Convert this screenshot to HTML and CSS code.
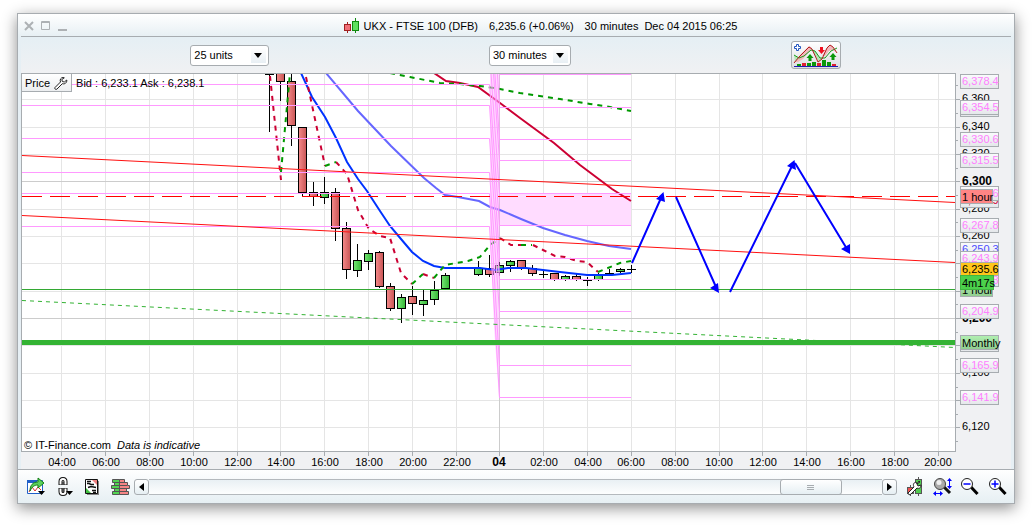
FILE: index.html
```
<!DOCTYPE html>
<html lang="en">
<head>
    <meta charset="utf-8">
    <title>UKX - FTSE 100 (DFB)</title>
    <link rel="stylesheet" href="styles.css">
</head>
<body>
    <div class="window">
        <header class="title-bar">
            <div class="window-buttons">
                <button aria-label="Close"><svg width="10" height="10"><path d="M1 1l8 8M9 1l-8 8" stroke-width="2"/></svg></button>
                <button aria-label="Maximize"><svg width="10" height="10"><path d="M.5 .5h8v8h-8zM1 1.500h8"/></svg></button>
                <button aria-label="Minimize"><svg width="10" height="10"><path d="M0 9h9" stroke-width="2"/></svg></button>
            </div>
            <div class="title">
                <svg class="title-icon" width="16" height="16">
                    <path d="M3.500 4v11" stroke="#a02020"/><rect x=".5" y="6.500" width="6" height="6" fill="#f07078" stroke="#a02020"/>
                    <path d="M11.500 0v15" stroke="#108a10"/><rect x="8.500" y="3.500" width="6" height="9" fill="#5fe05f" stroke="#108a10"/>
                </svg>
                <span class="name">UKX - FTSE 100 (DFB)</span>
                <span class="quote">6,235.6 (+0.06%)</span>
                <span class="period">30 minutes</span>
                <span>Dec 04 2015 06:25</span>
            </div>
        </header>

        <div class="toolbar">
            <select class="units" aria-label="Units"><option>25 units</option></select>
            <select class="timeframe" aria-label="Timeframe"><option>30 minutes</option></select>
            <button class="indicators" aria-label="Add indicator">
                <svg width="46" height="24">
                    <path d="M1 19l7-8 8-8 3 2-9 11-5 3zM29 13l6-10 3-1 6 8-4-3-4 1-4 5z" fill="#f3b8bc"/>
                    <path d="M1 12l5 3-4 4zM18 6l4 2 5 7 3 0-4 4z" fill="#b4e6b4"/>
                    <path d="M1 12l5 3 5-2 7-6 4 1 5 7 5 0 6-7 6-3" fill="none" stroke="#1a9b1a"/>
                    <path d="M1 20l5-6 10-10 3 2 6 13 4-3 5-11 3-3 3 2 4 6" fill="none" stroke="#b01c1c"/>
                    <path d="M4 1.500h2v2h2v2h-2v2h-2v-2h-2v-2h2z" fill="#fff" stroke="#2255c0" transform="translate(-.5)"/>
                    <path d="M15.500 18v-3h-2l3.500-4 3.500 4h-2v3zM38.500 17v-3h-2l3.500-4 3.500 4h-2v3z" fill="#0a980a"/>
                    <path d="M27 4h3v3h2l-3.500 4-3.500-4h2z" fill="#f01020"/>
                    <path d="M4 21h4v2h-4zM14 20h4v3h-4zM19 19h4v4h-4zM29 17h4v6h-4zM34 19h4v4h-4z" fill="#0a980a"/>
                    <path d="M9 20h4v3h-4zM24 20h4v3h-4zM39 21h4v2h-4z" fill="#e02030"/>
                    <path d="M1 23.500h44" stroke="#1c1cb0"/>
                </svg>
            </button>
        </div>

        <div class="chart">
            <svg class="plot" viewBox="21 73 990 396">
                <defs>
                    <clipPath id="area"><rect x="22" y="74" width="933" height="377"/></clipPath>
                    <linearGradient id="up"><stop offset="0" stop-color="#73e673"/><stop offset="1" stop-color="#35b535"/></linearGradient>
                    <linearGradient id="down"><stop offset="0" stop-color="#f58a8a"/><stop offset="1" stop-color="#c85555"/></linearGradient>
                    <linearGradient id="tag" x2="0" y2="1"><stop offset="0" stop-color="#fafbfc"/><stop offset="1" stop-color="#e4e7ea"/></linearGradient>
                    <linearGradient id="tag-green" x2="0" y2="1"><stop offset="0" stop-color="#b2f0b2"/><stop offset="1" stop-color="#8fcc8f"/></linearGradient>
                </defs>
                <rect x="21.500" y="73.500" width="934" height="378" class="frame"/>

                <g clip-path="url(#area)">
                    <!-- grid -->
                    <path class="grid" d="M61.500 73v378M105.500 73v378M149.500 73v378M193.500 73v378M237.500 73v378M280.500 73v378M324.500 73v378M368.500 73v378M412.500 73v378M456.500 73v378M543.500 73v378M587.500 73v378M631.500 73v378M675.500 73v378M719.500 73v378M762.500 73v378M806.500 73v378M850.500 73v378M894.500 73v378M938.500 73v378"/>
                    <path class="grid" d="M22 99.500h933M22 127.500h933M22 154.500h933M22 209.500h933M22 236.500h933M22 263.500h933M22 291.500h933M22 345.500h933M22 373.500h933M22 400.500h933M22 427.500h933"/>
                    <path class="grid major" d="M22 181.500h933M22 318.500h933M499.500 73v378"/>

                    <rect x="500" y="194" width="131" height="32" class="zone"/>

                    <!-- candles -->
                    <path class="wick" d="M269.500 73v59M265 74.500h9M280.500 73v28M291.500 73v73M302.500 127v70M313.500 182v24M324.500 177v27M335.500 188v53M346.500 222v57M357.500 244v33M368.500 250v20M379.500 251v37M390.500 283v28M401.500 294v29M412.500 286v29M423.500 290v26M434.500 281v24M445.500 273v16M478.500 261v15M489.500 255v22M499.500 262v14M510.500 260v12M521.500 260v10M532.500 265v11M543.500 270v8M539 274.500h9M554.500 273v8M565.500 275v6M576.500 273v8M587.500 277v9M583 280.500h9M598.500 273v8M609.500 269v5M605 273.500h9M620.500 268v5M631.500 265v8M627 269.500h9"/>
                    <g class="down">
                        <rect x="276.500" y="72.500" width="8" height="9"/>
                        <rect x="287.500" y="81.500" width="8" height="44"/>
                        <rect x="298.500" y="127.500" width="8" height="65"/>
                        <rect x="309.500" y="192.500" width="8" height="4"/>
                        <rect x="331.500" y="192.500" width="8" height="36"/>
                        <rect x="342.500" y="228.500" width="8" height="41"/>
                        <rect x="375.500" y="252.500" width="8" height="34"/>
                        <rect x="386.500" y="286.500" width="8" height="22"/>
                        <rect x="408.500" y="296.500" width="8" height="7"/>
                        <rect x="485.500" y="268.500" width="8" height="6"/>
                        <rect x="517.500" y="260.500" width="8" height="7"/>
                        <rect x="528.500" y="268.500" width="8" height="5"/>
                        <rect x="550.500" y="273.500" width="8" height="6"/>
                        <rect x="572.500" y="276.500" width="8" height="3"/>
                    </g>
                    <g class="up">
                        <rect x="320.500" y="192.500" width="8" height="5"/>
                        <rect x="353.500" y="260.500" width="8" height="10"/>
                        <rect x="364.500" y="253.500" width="8" height="8"/>
                        <rect x="397.500" y="297.500" width="8" height="11"/>
                        <rect x="419.500" y="300.500" width="8" height="4"/>
                        <rect x="430.500" y="290.500" width="8" height="9"/>
                        <rect x="441.500" y="275.500" width="8" height="13"/>
                        <rect x="474.500" y="268.500" width="8" height="6"/>
                        <rect x="495.500" y="265.500" width="8" height="7"/>
                        <rect x="506.500" y="261.500" width="8" height="4"/>
                        <rect x="561.500" y="276.500" width="8" height="3"/>
                        <rect x="594.500" y="274.500" width="8" height="5"/>
                        <rect x="616.500" y="269.500" width="8" height="2"/>
                    </g>

                    <!-- moving averages -->
                    <path class="ma-slow" d="M434 73l12 8 14 2 18 4 22 16 20 15 34 25 26 22 32 24 19 12"/>
                    <path class="ma-long dashed" d="M390 73l20 4 30 6 20 1 20 2 20 3 20 4 40 6 30 5 20 3 21 4"/>
                    <path class="ma-mid" d="M326 73l32 38 33 35 33 32 12 10 9 7 13 2 21 4 11 6 10 3 21 9 22 9 22 7 22 6 22 5 22 3"/>
                    <path class="ma-fast" d="M301 73l11 24 13 20 11 21 11 24 11 17 9 12 13 20 10 15 11 13 11 13 11 9 11 5 11 2h35l15 2 13-2h18l17 2 17 2 27 3h25l19-2"/>
                    <g class="dashed trend-down">
                        <path d="M270 76l11 104"/>
                        <path d="M306 77l19 89"/>
                        <path d="M336 162l11 12 11 36 11 19 11 7 10 2 11 35 11 11"/>
                        <path d="M423 274l11 4"/>
                        <path d="M500 238l11 7h10M533 245l10 5 12 6 10 1 12 4 10 1 11 10"/>
                    </g>
                    <g class="dashed trend-up">
                        <path d="M281 172l9-99"/>
                        <path d="M325 166l11-4M412 284l11-10"/>
                        <path d="M434 278l11-13 23-4 12-4 10-12 10-7M521 245h11"/>
                        <path d="M598 272l22-9 11-2"/>
                    </g>

                    <!-- pivot levels, previous day joined to today -->
                    <path class="pivot" d="M22 84.500H489.500L499.500 225.500H631M22 105.500H489.500L499.500 258.500H631M22 138.500H489.500L499.500 279.500H631M22 172.500H489.500L499.500 311.500H631M22 193.500H489.500L499.500 365.500H631M22 226.500H489.500L499.500 397.500H631"/>
                    <path class="pivot" d="M489.500 51.500L499.500 193.500H631M490.500 30L499.500 160.500H631M490.500 10L499.500 139.500H631M491.500-20L499.500 107.500H631M492.500-50L499.500 74.500H631"/>
                    <path class="pivot-band" d="M490 74v152l4 100 5 72h1V74z"/>

                    <!-- levels and channels -->
                    <path class="level-red" d="M22 196.500h933"/>
                    <path class="channel" d="M22 155.500L955 202.500M22 215.500L955 262.500"/>
                    <path class="level-green" d="M22 289.500h933"/>
                    <path class="support" d="M22 300.500L955 347.500"/>
                    <path class="monthly" d="M22 342.500h933"/>

                    <!-- forecast arrows -->
                    <path class="arrow" d="M632 263L661 198M676 197L716 287M730 292L792 166M795 163L847 249"/>
                    <path class="arrow-head" d="M663.500 192l1.500 10-9-3zM719 293l-9-5 8-5zM794.500 160l1.500 10-9-4zM850 254l-9-5 9-5z"/>
                </g>

                <text x="24" y="449">© IT-Finance.com</text>
                <text x="117" y="449" class="italic">Data is indicative</text>

                <!-- time axis -->
                <path class="tick" d="M61.500 452v4M105.500 452v4M149.500 452v4M193.500 452v4M237.500 452v4M280.500 452v4M324.500 452v4M368.500 452v4M412.500 452v4M456.500 452v4M499.500 452v4M543.500 452v4M587.500 452v4M631.500 452v4M675.500 452v4M719.500 452v4M762.500 452v4M806.500 452v4M850.500 452v4M894.500 452v4M938.500 452v4"/>
                <g class="times">
                    <text x="62" y="466">04:00</text>
                    <text x="106" y="466">06:00</text>
                    <text x="150" y="466">08:00</text>
                    <text x="194" y="466">10:00</text>
                    <text x="238" y="466">12:00</text>
                    <text x="281" y="466">14:00</text>
                    <text x="325" y="466">16:00</text>
                    <text x="369" y="466">18:00</text>
                    <text x="413" y="466">20:00</text>
                    <text x="457" y="466">22:00</text>
                    <text x="499" y="466" class="bold">04</text>
                    <text x="544" y="466">02:00</text>
                    <text x="588" y="466">04:00</text>
                    <text x="631" y="466">06:00</text>
                    <text x="675" y="466">08:00</text>
                    <text x="719" y="466">10:00</text>
                    <text x="763" y="466">12:00</text>
                    <text x="807" y="466">14:00</text>
                    <text x="851" y="466">16:00</text>
                    <text x="895" y="466">18:00</text>
                    <text x="938" y="466">20:00</text>
                </g>

                <!-- price axis -->
                <path class="tick" d="M956 99.500h4M956 127.500h4M956 154.500h4M956 181.500h4M956 209.500h4M956 236.500h4M956 263.500h4M956 291.500h4M956 318.500h4M956 345.500h4M956 373.500h4M956 400.500h4M956 427.500h4"/>
                <path class="tick" d="M956 85.500h2M956 113.500h2M956 140.500h2M956 168.500h2M956 195.500h2M956 222.500h2M956 250.500h2M956 277.500h2M956 304.500h2M956 332.500h2M956 359.500h2M956 387.500h2M956 414.500h2M956 441.500h2"/>
                <text x="962" y="102">6,360</text>
                <text x="962" y="130">6,340</text>
                <text x="962" y="157">6,320</text>
                <text x="962" y="185" class="bold">6,300</text>
                <text x="962" y="212">6,280</text>
                <text x="962" y="239">6,260</text>
                <text x="962" y="322" class="bold">6,200</text>
                <text x="962" y="376">6,160</text>
                <text x="962" y="430">6,120</text>
                <g class="tags">
                    <rect x="960.500" y="74.500" width="38" height="14"/><text x="962" y="85">6,378.4</text>
                    <rect x="960.500" y="102.500" width="38" height="14"/>
                    <rect x="960.500" y="100.500" width="38" height="14"/><text x="962" y="111">6,354.5</text>
                    <rect x="960.500" y="132.500" width="38" height="14"/><text x="962" y="143">6,330.6</text>
                    <rect x="960.500" y="153.500" width="38" height="14"/><text x="962" y="164">6,315.5</text>
                    <rect x="960.500" y="193.500" width="38" height="14"/><text x="962" y="204" class="crimson">6,285.9</text>
                    <rect x="960.500" y="186.500" width="38" height="14"/><text x="962" y="197">6,291.6</text>
                    <rect x="960.500" y="189.500" width="32" height="14" class="red"/><text x="962" y="201" class="dark">1 hour</text>
                    <rect x="960.500" y="218.500" width="38" height="14"/><text x="962" y="229">6,267.8</text>
                    <rect x="960.500" y="242.500" width="38" height="14"/><text x="962" y="253" class="blue">6,250.3</text>
                    <rect x="960.500" y="251.500" width="38" height="14"/><text x="962" y="262">6,243.9</text>
                    <rect x="960.500" y="282.500" width="32" height="14" class="green"/><text x="962" y="294" class="dark">1 hour</text>
                    <rect x="960.500" y="272.500" width="38" height="14"/><text x="962" y="284">6,228.8</text>
                    <rect x="960.500" y="262.500" width="38" height="13" class="last"/><text x="962" y="273" class="dark">6,235.6</text>
                    <rect x="960.500" y="275.500" width="33" height="14" class="countdown"/><text x="962" y="287" class="dark">4m17s</text>
                    <rect x="960.500" y="304.500" width="38" height="14"/><text x="962" y="315">6,204.9</text>
                    <rect x="960.500" y="337.500" width="38" height="14"/>
                    <rect x="960.500" y="335.500" width="38" height="14" class="green"/><text x="962" y="347" class="dark">Monthly</text>
                    <rect x="960.500" y="358.500" width="38" height="14"/><text x="962" y="369">6,165.9</text>
                    <rect x="960.500" y="390.500" width="38" height="14"/><text x="962" y="401">6,141.9</text>
                </g>
            </svg>
            <div class="legend">
                <button class="price">Price
                    <svg width="14" height="14"><path d="M9 1.500c-2 0-3.500 2-2.500 4.500l-5.500 5.500c-.8 1.200.8 2.500 1.800 1.700l5.500-5.500c2.500.8 4.800-1 4.500-3.700l-2.500 2-2-.5-.5-2 2.500-1.700z" fill="#fff" stroke="#222"/></svg>
                </button>
                <span>Bid : 6,233.1 Ask : 6,238.1</span>
            </div>
        </div>

        <footer class="bottom-bar">
            <button class="tool" aria-label="Export chart">
                <svg width="20" height="20">
                    <path d="M.5 3.500h15v13h-15z" fill="#fff" stroke="#2060c8"/><path d="M0 4.500h10" stroke="#2060c8" stroke-width="3"/>
                    <path d="M2 15l3-5 3 4 3-4 3 3" fill="none" stroke="#e03030"/>
                    <path d="M3 14c0-6 3-9 8-9v-4l6 5-6 5v-3c-4 0-6 2-8 6z" fill="#5cd05c" stroke="#158015"/>
                    <path d="M11 14h7l-3.500 4z"/>
                </svg>
            </button>
            <button class="tool" aria-label="Link charts">
                <svg width="18" height="20" fill="none">
                    <path d="M3.500 8v-3.500q0-2.500 2.500-2.500t2.500 2.500v3.500M3.500 11v3.500q0 2.500 2.500 2.500t2.500-2.500v-3.500" stroke="#111" stroke-width="4"/>
                    <path d="M3.500 7.500v-3q0-2.500 2.500-2.500t2.500 2.500v3M3.500 11.500v3q0 2.500 2.500 2.500t2.500-2.500v-3" stroke="#fff" stroke-width="2"/>
                    <path d="M6 5v3M6 11v4" stroke="#111"/>
                    <path d="M9 14h7l-3.500 4z" fill="#000"/>
                </svg>
            </button>
            <button class="tool" aria-label="News">
                <svg width="16" height="20">
                    <path d="M2 4h12v14h-12z" fill="#888"/><path d="M.5 2.500h12v14h-12z" fill="#fff" stroke="#111"/>
                    <path d="M7 3h5v5z" fill="#f08080"/><path d="M1 16v-5l5 5z" fill="#40c040"/>
                    <path d="M2 4.500h4M2 6.500h2l2 1h3M3 10.500l3-1 5 1M7 13.500h4M8 15.500h3" fill="none" stroke="#111" stroke-width="1.500"/>
                </svg>
            </button>
            <button class="tool" aria-label="Order book">
                <svg width="20" height="20">
                    <path d="M1.500 2.500h7v15h-7v-3h2v-3h-3v-3h3v-3h-2z" fill="#52d452" stroke="#555"/>
                    <path d="M8.500 2.500h5v3h3v3h2v3h-3v3h2v3h-9z" fill="#f58585" stroke="#555"/>
                    <path d="M3 5.500h11M3 8.500h13M3 11.500h13M3 14.500h13" stroke="#555"/>
                </svg>
            </button>
            <div class="scrollbar">
                <button class="step" aria-label="Scroll left"><svg width="5" height="8"><path d="M5 0v8L0 4z"/></svg></button>
                <input type="range" min="0" max="100" value="94" aria-label="Chart position">
                <button class="step" aria-label="Scroll right"><svg width="5" height="8"><path d="M0 0v8l5-4z"/></svg></button>
            </div>
            <div class="view-tools">
                <button class="tool" aria-label="Chart settings">
                    <svg width="18" height="20">
                        <path d="M3.500 8v11M11.500 0v19" stroke="#555"/><rect x=".5" y="10.500" width="6" height="6" fill="#f05050" stroke="#555"/><rect x="8.500" y="2.500" width="6" height="14" fill="#50cc50" stroke="#555"/>
                        <path d="M12 4l-2 3-1-2c-3 1-3 3-2 5l-6 6c0 2 2 2 3 1l6-6c2 1 4 0 4-3l-3 1-1-2 3-2z" fill="#fff" stroke="#222"/>
                    </svg>
                </button>
                <button class="tool" aria-label="Auto scale">
                    <svg width="20" height="20">
                        <path d="M11 10l6 6" stroke="#111" stroke-width="3"/><circle cx="7" cy="7" r="5.500" fill="#aaa" stroke="#444"/><circle cx="6" cy="5.500" r="2.500" fill="#eee"/>
                        <path d="M16.500 3v7M2 16.500h7" stroke="#0000ff"/><path d="M16.500 1l2.500 3h-5zM16.500 12l2.500-3h-5zM0 16.500l3-2.500v5zM10 16.500l-3-2.500v5z" fill="#0000ff"/>
                    </svg>
                </button>
                <button class="tool" aria-label="Zoom out">
                    <svg width="20" height="20"><path d="M10 10l6.500 7" stroke="#000" stroke-width="3"/><circle cx="6" cy="7" r="5.500" fill="#fff" stroke="#222"/><path d="M2.500 7h7" stroke="#0000ff" stroke-width="1.500"/></svg>
                </button>
                <button class="tool" aria-label="Zoom in">
                    <svg width="20" height="20"><path d="M10 10l6.500 7" stroke="#000" stroke-width="3"/><circle cx="6" cy="7" r="5.500" fill="#fff" stroke="#222"/><path d="M2.500 7h7M6 3.500v7" stroke="#0000ff" stroke-width="1.500"/></svg>
                </button>
            </div>
        </footer>
    </div>
</body>
</html>
```
FILE: styles.css
```
* {
    box-sizing: border-box;
}

body {
    margin: 0;
    padding: 13px 17px 21px;
    background: #fff;
    font-family: "Liberation Sans", Arial, sans-serif;
    font-size: 11px;
    color: #000;
}

button {
    margin: 0;
    padding: 0;
    border: none;
    background: none;
    font: inherit;
    color: inherit;
}

svg {
    display: block;
}

.window {
    padding: 0 3px;
    border: 1px solid #a7acb0;
    background: #e6eff4;
    box-shadow: 0 4px 14px rgba(0, 0, 0, 0.45);
}

/* Title bar */
.title-bar {
    display: flex;
    align-items: center;
    height: 23px;
    margin: 0 -3px;
    padding: 0 3px;
    background: linear-gradient(#fff, #e6eff3);
    position: relative;
}

.title-bar::after {
    content: "";
    position: absolute;
    left: 3px;
    right: 3px;
    bottom: 0;
    height: 1px;
    background: #a7acb0;
}

.window-buttons {
    display: flex;
    gap: 7px;
    padding-left: 3px;
}

.window-buttons svg {
    fill: none;
    stroke: #adb1b4;
}

.title {
    display: flex;
    flex: 1;
    align-items: center;
    justify-content: center;
    padding-left: 2px;
    white-space: nowrap;
}

.title-icon {
    margin-right: 4px;
}

.name,
.quote {
    margin-right: 11px;
}

.period {
    margin-right: 6px;
}

/* Toolbar */
.toolbar {
    display: flex;
    align-items: center;
    justify-content: space-between;
    height: 36px;
    padding: 0 17.2% 0 17.1%;
    background: linear-gradient(#e5eff4, #f0f1f3);
}

select {
    appearance: none;
    height: 21px;
    padding: 0 20px 0 3px;
    border: 1px solid #a7acb0;
    border-radius: 3px;
    font: inherit;
    color: inherit;
    background:
        url("data:image/svg+xml,%3Csvg xmlns='http://www.w3.org/2000/svg' width='8' height='5'%3E%3Cpath d='M0 0h8L4 5z'/%3E%3C/svg%3E") no-repeat right 6px center,
        linear-gradient(#fff, #e8eff4) no-repeat right 2px center / 15px 15px,
        #fff;
}

.units {
    width: 79px;
}

.timeframe {
    width: 82px;
}

.indicators {
    padding: 1px;
    border: 1px solid #a7acb0;
    border-radius: 3px;
    background: linear-gradient(#fff, #dcdee0);
}

/* Chart */
.chart {
    position: relative;
    background: #f0f1f3;
}

.plot {
    width: 100%;
    height: auto;
}

.plot text {
    font-size: 11px;
}

.plot .bold {
    font-size: 12px;
    font-weight: bold;
}

.italic {
    font-style: italic;
}

.times {
    text-anchor: middle;
}

.frame {
    fill: #fff;
    stroke: #a7acb0;
}

.grid,
.tick,
.wick,
.arrow,
.dashed,
.pivot,
.channel,
.ma-slow,
.ma-mid,
.ma-fast {
    fill: none;
}

.grid {
    stroke: #e5e5e5;
}

.grid.major {
    stroke: #ccc;
}

.tick {
    stroke: #a7acb0;
}

.zone {
    fill: #ffdcff;
}

.wick {
    stroke: #000;
}

.up {
    fill: url(#up);
    stroke: #000;
}

.down {
    fill: url(#down);
    stroke: #000;
}

.ma-slow {
    stroke: #cc0033;
    stroke-width: 2;
}

.ma-mid {
    stroke: #6666ff;
    stroke-width: 2;
}

.ma-fast {
    stroke: #0033ff;
    stroke-width: 2;
}

.dashed {
    stroke-width: 2;
    stroke-dasharray: 5 5;
}

.ma-long,
.trend-up {
    stroke: #009900;
}

.trend-down {
    stroke: #cc0033;
}

.pivot {
    stroke: #ff99ff;
}

.pivot-band {
    fill: #ff99ff;
    opacity: 0.4;
}

.channel {
    stroke: #ff1010;
}

.level-red {
    stroke: #f00;
    stroke-dasharray: 20 8;
}

.level-green {
    stroke: #33a833;
}

.support {
    stroke: #33b333;
    stroke-dasharray: 4 4;
}

.monthly {
    stroke: #33b333;
    stroke-width: 5;
}

.arrow {
    stroke: #00f;
    stroke-width: 2;
}

.arrow-head {
    fill: #00f;
}

.tags rect {
    fill: url(#tag);
    stroke: #a7acb0;
}

.tags text {
    fill: #ff80ff;
}

.tags .dark {
    fill: #000;
}

.tags .blue {
    fill: #4d4dff;
}

.tags .crimson {
    fill: #cc0033;
}

.tags .red {
    fill: #ff8585;
}

.tags .green {
    fill: url(#tag-green);
}

.tags .last {
    fill: #ffc61a;
}

.tags .countdown {
    fill: #4cd14c;
    stroke: #40b540;
}

.legend {
    position: absolute;
    top: 0;
    left: 0;
    display: flex;
    align-items: center;
    gap: 4px;
}

.price {
    display: flex;
    align-items: center;
    gap: 4px;
    height: 19px;
    padding: 0 3px;
    border: 1px solid #a7acb0;
    background: linear-gradient(#fff, #eceef0);
}

/* Bottom bar */
.bottom-bar {
    display: flex;
    align-items: center;
    gap: 10px;
    height: 34px;
    margin: 0 -3px;
    padding: 2px 5px 0 9px;
    background: linear-gradient(#fff, #e6eff3);
    box-shadow: inset 0 1px #a7acb0;
}

.view-tools {
    display: flex;
    gap: 8px;
}

.tool {
    flex: none;
}

.scrollbar {
    display: flex;
    flex: 1;
    height: 16px;
    margin-left: -7px;
}

.step {
    display: flex;
    align-items: center;
    justify-content: center;
    width: 15px;
    border: 1px solid #a7acb0;
    border-radius: 3px;
    background: linear-gradient(#fff, #e6eff3);
}

input[type="range"] {
    appearance: none;
    flex: 1;
    min-width: 0;
    height: 16px;
    margin: 0;
    border: solid #b4b9bd;
    border-width: 1px 0;
    background: linear-gradient(#e9f0f4, #fdfefe);
}

input[type="range"]::-webkit-slider-thumb {
    appearance: none;
    width: 62px;
    height: 16px;
    border: 1px solid #a7acb0;
    border-radius: 3px;
    background:
        repeating-linear-gradient(#a7acb0 0 1px, transparent 1px 2px) no-repeat center / 7px 5px,
        linear-gradient(#fff, #e6eff3);
}
```
